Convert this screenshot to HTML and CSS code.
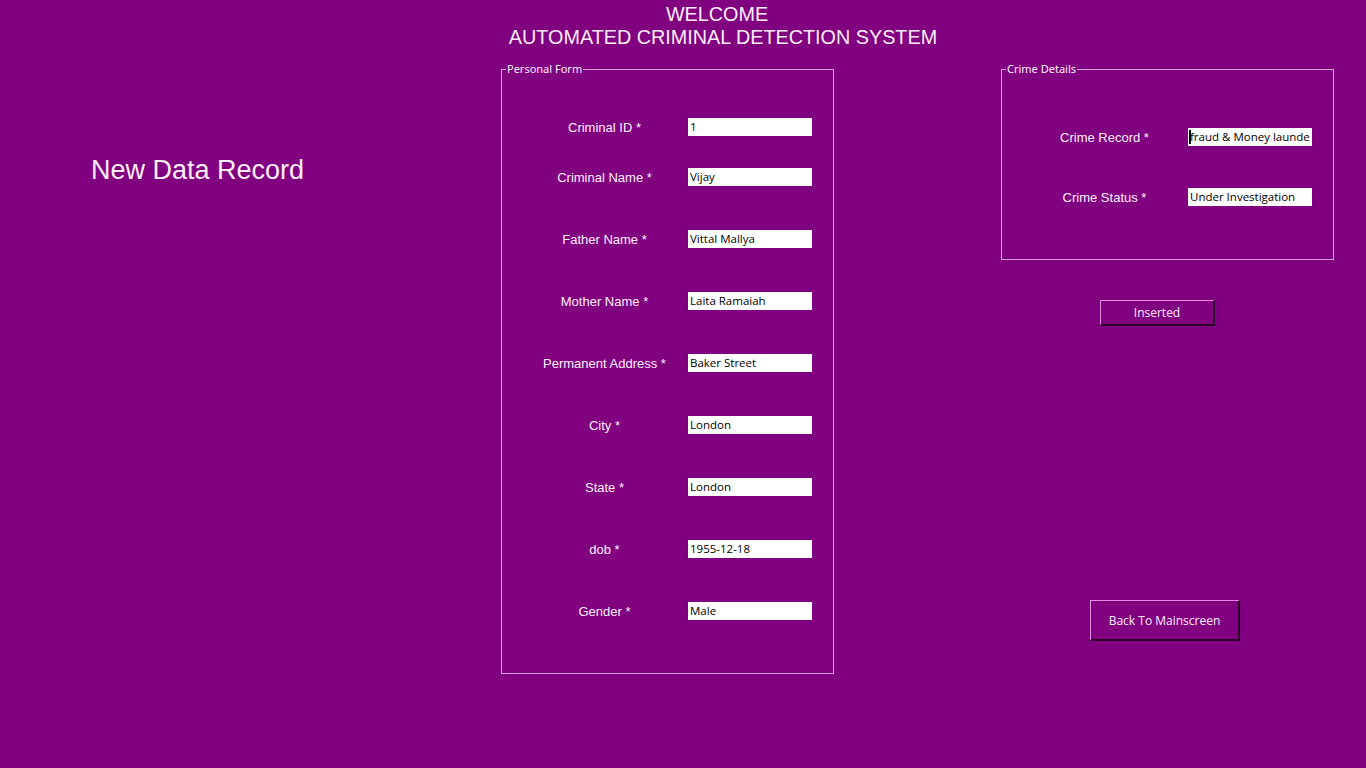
FILE: index.html
```html
<!DOCTYPE html>
<html>
<head>
<meta charset="utf-8">
<link rel="stylesheet" href="styles.css">
</head>
<body>
<header class="header">
  <div class="welcome">WELCOME</div>
  <div>AUTOMATED CRIMINAL DETECTION SYSTEM</div>
</header>
<main class="main">
  <section class="left">
    <h1 class="page-title">New Data Record</h1>
  </section>
  <fieldset class="frame personal">
    <legend>Personal Form</legend>
    <div class="rows personal-rows">
      <div class="row first"><label>Criminal ID *</label><input class="field" value="1"></div>
      <div class="row"><label>Criminal Name *</label><input class="field" value="Vijay"></div>
      <div class="row"><label>Father Name *</label><input class="field" value="Vittal Mallya"></div>
      <div class="row"><label>Mother Name *</label><input class="field" value="Laita Ramaiah"></div>
      <div class="row"><label>Permanent Address *</label><input class="field" value="Baker Street"></div>
      <div class="row"><label>City *</label><input class="field" value="London"></div>
      <div class="row"><label>State *</label><input class="field" value="London"></div>
      <div class="row"><label>dob *</label><input class="field" value="1955-12-18"></div>
      <div class="row"><label>Gender *</label><input class="field" value="Male"></div>
    </div>
  </fieldset>
  <section class="right">
    <fieldset class="frame crime">
      <legend>Crime Details</legend>
      <div class="rows crime-rows">
        <div class="row"><label>Crime Record *</label><div class="field caret-field"><span class="caret"></span>fraud &amp; Money launde</div></div>
        <div class="row"><label>Crime Status *</label><input class="field" value="Under Investigation"></div>
      </div>
    </fieldset>
    <button class="btn inserted">Inserted</button>
    <button class="btn back">Back To Mainscreen</button>
  </section>
</main>
</body>
</html>
```
FILE: styles.css
```css
html, body {
  margin: 0;
  padding: 0;
  background: #800080;
  width: 1366px;
  height: 768px;
  overflow: hidden;
}
body {
  font-family: "Liberation Sans", Arial, sans-serif;
  color: #ffffff;
}
.header {
  padding: 3px 0 0 80px;
  text-align: center;
  font-size: 19.8px;
  line-height: 23px;
  color: #ffeeff;
}
.welcome {
  padding-right: 12px;
}
.main {
  display: flex;
  align-items: flex-start;
  margin-top: 14px;
}
.left {
  width: 501px;
}
.page-title {
  margin: 92px 0 0 91px;
  font-size: 27px;
  font-weight: normal;
  line-height: 30px;
  color: #ffeeff;
}
.frame {
  margin: 0;
  border: 1px solid #d4a2d4;
  box-sizing: border-box;
  width: 333px;
  padding: 0;
}
.frame legend {
  font-family: "Noto Sans", "Open Sans", sans-serif;
  font-size: 11px;
  line-height: 12px;
  padding: 0 1px;
  margin-left: 4px;
  color: #ffeeff;
}
.personal {
  height: 611px;
}
.rows {
  display: flex;
  flex-direction: column;
  padding-left: 19px;
}
.row {
  display: flex;
  align-items: center;
  height: 18px;
}
.row label {
  width: 167px;
  text-align: center;
  font-size: 13px;
  color: #fff0ff;
}
.personal-rows {
  margin-top: 43px;
  gap: 44px;
}
.row.first {
  margin-bottom: -12px;
}
.field {
  box-sizing: border-box;
  width: 124px;
  height: 18px;
  border: none;
  margin: 0;
  padding: 0 2px;
  background: #ffffff;
  font-family: "Open Sans", "Noto Sans", sans-serif;
  font-size: 11.5px;
  line-height: 18px;
  color: #000;
  outline: none;
}
.caret-field {
  display: flex;
  align-items: center;
  white-space: nowrap;
  overflow: hidden;
  padding-left: 1px;
}
.caret {
  display: inline-block;
  width: 2px;
  height: 14px;
  background: #000;
  margin-right: -1px;
}
.right {
  margin-left: 167px;
  width: 333px;
  display: flex;
  flex-direction: column;
  align-items: flex-start;
}
.crime {
  height: 197px;
}
.crime-rows {
  margin-top: 53px;
  gap: 42px;
}
.btn {
  box-sizing: border-box;
  background: #800080;
  color: #ffeeff;
  font-family: "Open Sans", "Noto Sans", sans-serif;
  font-size: 12px;
  border: 1px solid;
  border-color: #e48ee4 #2a002a #2a002a #e48ee4;
  border-bottom-width: 2px;
  border-right-width: 2px;
  padding: 0;
  cursor: pointer;
}
.inserted {
  margin: 40px 0 0 99px;
  width: 115px;
  height: 26px;
}
.back {
  margin: 274px 0 0 89px;
  width: 150px;
  height: 41px;
}
```
